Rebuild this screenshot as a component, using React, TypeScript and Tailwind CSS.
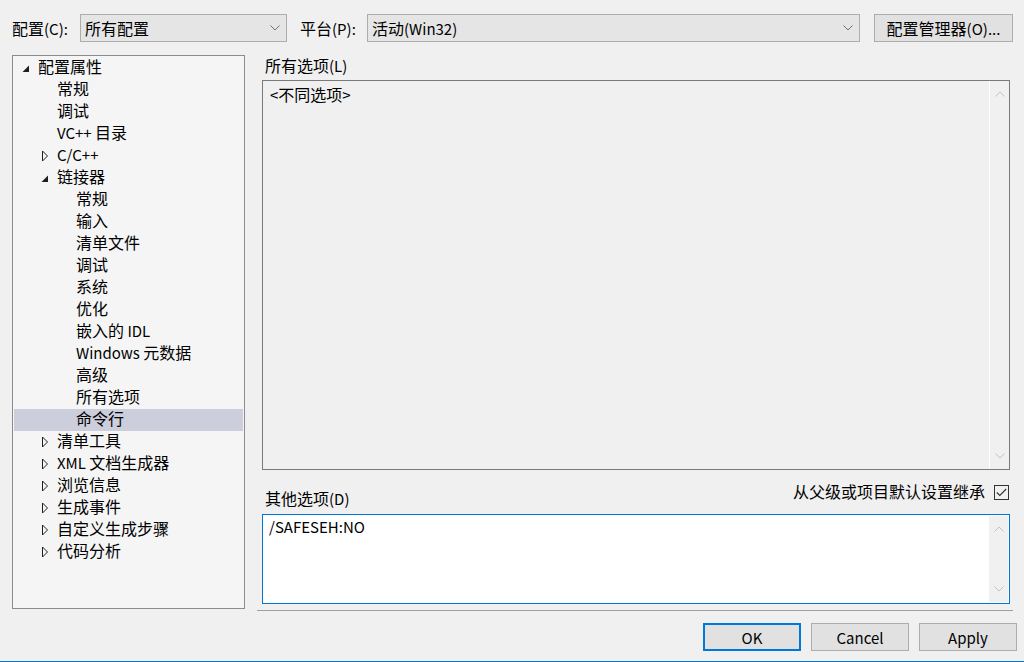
import React from "react";

type Item = { label: string; level: 0 | 1 | 2; state?: "open" | "closed"; selected?: boolean };

const items: Item[] = [
  { label: "配置属性", level: 0, state: "open" },
  { label: "常规", level: 1 },
  { label: "调试", level: 1 },
  { label: "VC++ 目录", level: 1 },
  { label: "C/C++", level: 1, state: "closed" },
  { label: "链接器", level: 1, state: "open" },
  { label: "常规", level: 2 },
  { label: "输入", level: 2 },
  { label: "清单文件", level: 2 },
  { label: "调试", level: 2 },
  { label: "系统", level: 2 },
  { label: "优化", level: 2 },
  { label: "嵌入的 IDL", level: 2 },
  { label: "Windows 元数据", level: 2 },
  { label: "高级", level: 2 },
  { label: "所有选项", level: 2 },
  { label: "命令行", level: 2, selected: true },
  { label: "清单工具", level: 1, state: "closed" },
  { label: "XML 文档生成器", level: 1, state: "closed" },
  { label: "浏览信息", level: 1, state: "closed" },
  { label: "生成事件", level: 1, state: "closed" },
  { label: "自定义生成步骤", level: 1, state: "closed" },
  { label: "代码分析", level: 1, state: "closed" },
];

const padByLevel = ["pl-[8px]", "pl-[27px]", "pl-[46px]"];

// Render CJK characters slightly larger than Latin, like Microsoft YaHei UI does.
function T({ children }: { children: string }) {
  const runs = children.match(/[\u3000-\u9fff\uff00-\uffef]+|[^\u3000-\u9fff\uff00-\uffef]+/g) || [];
  return (
    <span>
      {runs.map((r, i) =>
        /[\u3000-\u9fff\uff00-\uffef]/.test(r) ? (
          <span key={i} className="text-[16px]">
            {r}
          </span>
        ) : (
          <span key={i} className="text-[15px]">
            {r}
          </span>
        )
      )}
    </span>
  );
}

function Chevron({ up, color = "#606060" }: { up?: boolean; color?: string }) {
  return (
    <svg width="10" height="6" viewBox="0 0 10 6">
      <polyline
        points={up ? "0.5,5.5 5,1 9.5,5.5" : "0.5,0.5 5,5 9.5,0.5"}
        fill="none"
        stroke={color}
        strokeWidth="1"
      />
    </svg>
  );
}

function Combo({ text, width }: { text: string; width: string }) {
  return (
    <div
      className={`${width} h-[28px] border border-[#adadad] bg-[#e5e5e5] flex items-center pl-[4px] pr-[6px] justify-between`}
    >
      <span className="pb-[1px]">
        <T>{text}</T>
      </span>
      <Chevron color="#707070" />
    </div>
  );
}

function Scrollbar({ bg }: { bg: string }) {
  return (
    <div className={`w-[20px] h-full ${bg} border-l border-l-[#ffffff] flex flex-col items-center justify-between py-[10px]`}>
      <Chevron up color="#c2c2c2" />
      <Chevron color="#c2c2c2" />
    </div>
  );
}

function Btn({ children, focus }: { children: React.ReactNode; focus?: boolean }) {
  return (
    <div
      className={`w-[98px] h-[28px] flex items-center justify-center bg-[#e1e1e1] ${
        focus ? "border-2 border-[#0078d7]" : "border border-[#adadad]"
      }`}
    >
      {children}
    </div>
  );
}

export default function App() {
  return (
    <div
      className="w-[1024px] h-[662px] bg-[#f0f0f0] text-[15px] text-[#000000] flex flex-col overflow-hidden leading-none"
      style={{ fontFamily: '"Noto Sans CJK SC", "Noto Sans", sans-serif' }}
    >
      {/* Top row */}
      <div className="flex items-center mt-[14px] h-[28px] pl-[12px]">
        <span className="w-[68px] pb-[1px]">
          <T>配置(C):</T>
        </span>
        <Combo text="所有配置" width="w-[207px]" />
        <span className="ml-[13px] w-[67px] pb-[1px]">
          <T>平台(P):</T>
        </span>
        <Combo text="活动(Win32)" width="w-[493px]" />
        <div className="ml-[14px] w-[139px] h-[28px] border border-[#adadad] bg-[#e1e1e1] flex items-center justify-center pb-[1px]">
          <T>配置管理器(O)...</T>
        </div>
      </div>

      {/* Main */}
      <div className="flex mt-[13px] pl-[12px]">
        {/* Tree */}
        <div className="w-[233px] h-[554px] border border-[#8c8c8c] bg-[#f5f5f5] p-[1px]">
          {items.map((it, i) => (
            <div
              key={i}
              className={`h-[22px] flex items-center ${padByLevel[it.level]} ${it.selected ? "bg-[#cccedb]" : ""}`}
            >
              <div className="w-[16px] h-[22px] flex items-center">
                {it.state === "open" && (
                  <svg width="8" height="8" viewBox="0 0 8 8" className="mt-[1px]">
                    <polygon points="7,0.5 7,7 0.5,7" fill="#1e1e1e" />
                  </svg>
                )}
                {it.state === "closed" && (
                  <svg width="8" height="12" viewBox="0 0 8 12">
                    <polygon points="1.5,1 6.5,6 1.5,11" fill="none" stroke="#1e1e1e" strokeWidth="1" />
                  </svg>
                )}
              </div>
              <span className="pb-[4px]">
                <T>{it.label}</T>
              </span>
            </div>
          ))}
        </div>

        {/* Right column */}
        <div className="ml-[17px] w-[748px] flex flex-col">
          <div className="h-[25px] flex items-center pl-[3px] pb-[6px]">
            <T>所有选项(L)</T>
          </div>
          <div className="h-[390px] border border-[#7a7a7a] bg-[#f0f0f0] flex">
            <div className="flex-1 pl-[7px] pt-[5px]">
              <T>&lt;不同选项&gt;</T>
            </div>
            <Scrollbar bg="bg-[#f0f0f0]" />
          </div>
          <div className="h-[44px] flex items-end pb-[6px] pl-[3px] pr-[1px]">
            <span className="mb-[2px]">
              <T>其他选项(D)</T>
            </span>
            <div className="flex-1" />
            <span className="mb-[9px]">
              <T>从父级或项目默认设置继承</T>
            </span>
            <div className="ml-[9px] mb-[8px] w-[15px] h-[15px] border border-[#333333] bg-[#f0f0f0] flex items-center justify-center">
              <svg width="11" height="9" viewBox="0 0 11 9">
                <polyline points="0.8,4.5 3.8,7.5 10.2,1" fill="none" stroke="#333333" strokeWidth="1.1" />
              </svg>
            </div>
          </div>
          <div className="h-[90px] border border-[#0078d7] bg-[#ffffff] flex">
            <div className="flex-1 pl-[6px] pt-[4px]">
              <T>/SAFESEH:NO</T>
            </div>
            <div className="py-[1px] pr-[1px] h-full">
              <Scrollbar bg="bg-[#f0f0f0]" />
            </div>
          </div>
          <div className="mt-[6px] -ml-[5px] w-[756px] h-[1px] bg-[#a0a0a0]" />
        </div>
      </div>

      {/* Buttons */}
      <div className="flex justify-end gap-[10px] pr-[7px] mt-[12px]">
        <Btn focus>OK</Btn>
        <Btn>Cancel</Btn>
        <Btn>Apply</Btn>
      </div>
      <div className="flex-1" />
      <div className="h-[1px] bg-[#0078d7]" />
    </div>
  );
}
